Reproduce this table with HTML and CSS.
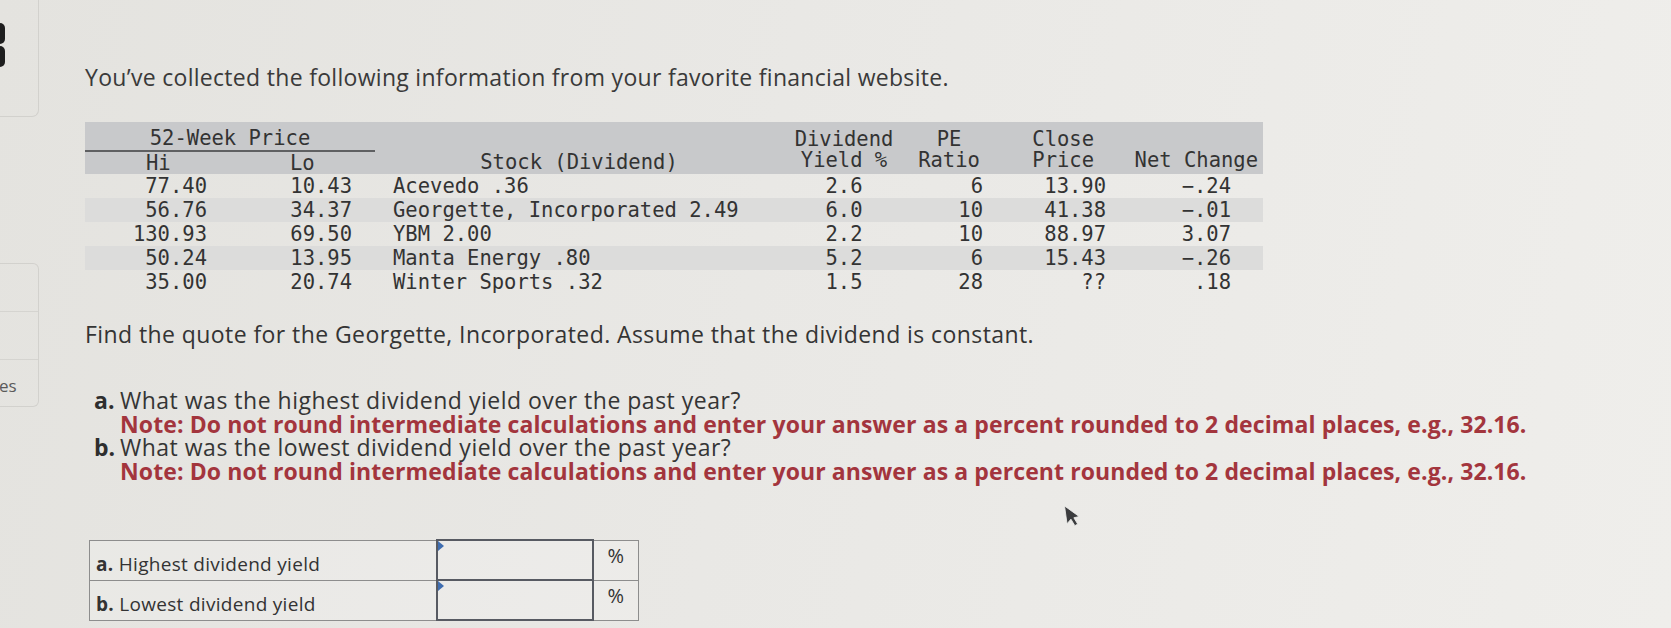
FILE: index.html
```html
<!DOCTYPE html>
<html lang="en">
<head>
<meta charset="utf-8">
<title>Stock quote question</title>
<link rel="stylesheet" href="styles.css">
</head>
<body>
<div class="page">
  <aside class="side">
    <div class="side-top"><span class="blob"></span><span class="blob"></span></div>
    <div class="side-box">
      <div class="side-cell"></div>
      <div class="side-cell"></div>
      <div class="side-cell last"><span class="side-text">es</span></div>
    </div>
  </aside>
  <main class="content">
    <p class="intro">You’ve collected the following information from your favorite financial website.</p>
    <table class="quote">
      <colgroup>
        <col class="c-hi"><col class="c-lo"><col class="c-stock"><col class="c-yld"><col class="c-pe"><col class="c-close"><col class="c-net">
      </colgroup>
      <thead>
        <tr class="h1">
          <th colspan="2" class="wk">52-Week Price</th>
          <th rowspan="2" class="stock-h">Stock (Dividend)</th>
          <th rowspan="2" class="yld-h">Dividend<br>Yield %</th>
          <th rowspan="2" class="pe-h">PE<br>Ratio</th>
          <th rowspan="2" class="close-h">Close<br>Price</th>
          <th rowspan="2" class="net-h">Net Change</th>
        </tr>
        <tr class="h2">
          <th class="hi-h">Hi</th>
          <th class="lo-h">Lo</th>
        </tr>
      </thead>
      <tbody>
        <tr><td class="hi">77.40</td><td class="lo">10.43</td><td class="stock">Acevedo .36</td><td class="yld">2.6</td><td class="pe">6</td><td class="close">13.90</td><td class="net">−.24</td></tr>
        <tr><td class="hi">56.76</td><td class="lo">34.37</td><td class="stock">Georgette, Incorporated 2.49</td><td class="yld">6.0</td><td class="pe">10</td><td class="close">41.38</td><td class="net">−.01</td></tr>
        <tr><td class="hi">130.93</td><td class="lo">69.50</td><td class="stock">YBM 2.00</td><td class="yld">2.2</td><td class="pe">10</td><td class="close">88.97</td><td class="net">3.07</td></tr>
        <tr><td class="hi">50.24</td><td class="lo">13.95</td><td class="stock">Manta Energy .80</td><td class="yld">5.2</td><td class="pe">6</td><td class="close">15.43</td><td class="net">−.26</td></tr>
        <tr><td class="hi">35.00</td><td class="lo">20.74</td><td class="stock">Winter Sports .32</td><td class="yld">1.5</td><td class="pe">28</td><td class="close">??</td><td class="net">.18</td></tr>
      </tbody>
    </table>
    <p class="find">Find the quote for the Georgette, Incorporated. Assume that the dividend is constant.</p>
    <ol class="questions">
      <li class="q">
        <b class="mk">a.</b>
        <div class="q-body">
          <div>What was the highest dividend yield over the past year?</div>
          <div class="note">Note: Do not round intermediate calculations and enter your answer as a percent rounded to 2 decimal places, e.g., 32.16.</div>
        </div>
      </li>
      <li class="q">
        <b class="mk">b.</b>
        <div class="q-body">
          <div>What was the lowest dividend yield over the past year?</div>
          <div class="note">Note: Do not round intermediate calculations and enter your answer as a percent rounded to 2 decimal places, e.g., 32.16.</div>
        </div>
      </li>
    </ol>
    <table class="answers">
      <tr>
        <td class="lbl"><b>a.</b> Highest dividend yield</td>
        <td class="inp"><span class="flag"></span></td>
        <td class="unit">%</td>
      </tr>
      <tr>
        <td class="lbl"><b>b.</b> Lowest dividend yield</td>
        <td class="inp"><span class="flag"></span></td>
        <td class="unit">%</td>
      </tr>
    </table>
  </main>
  <svg class="cursor" width="16" height="24" viewBox="0 0 16 24" aria-hidden="true">
    <path d="M2 1 L2 19 L6.5 15 L9.5 22 L12.5 20.8 L9.6 14 L15 13.5 Z" fill="#3b3c3e" stroke="#eeeeec" stroke-width="0.8"/>
  </svg>
</div>
</body>
</html>
```

FILE: styles.css
```css
html, body {
  margin: 0;
  padding: 0;
}

body {
  width: 1671px;
  height: 628px;
  overflow: hidden;
  background: linear-gradient(100deg, #e4e3df 0%, #e9e8e5 45%, #efeeeb 100%);
  color: #343434;
  font-family: "Open Sans", Lato, sans-serif;
}

.page {
  position: relative;
  display: flex;
  align-items: flex-start;
  height: 628px;
}

/* left sidebar fragment */
.side {
  width: 39px;
  flex: none;
  display: flex;
  flex-direction: column;
}

.side-top {
  border-right: 1px solid #d2d1cd;
  border-bottom: 1px solid #d2d1cd;
  border-bottom-right-radius: 7px;
  display: flex;
  flex-direction: column;
  gap: 2px;
  padding-top: 23px;
  box-sizing: border-box;
  height: 117px;
}

.blob {
  display: block;
  width: 5px;
  height: 21px;
  background: #1e1e1e;
  border-radius: 0 5px 5px 0;
}

.side-box {
  margin-top: 146px;
  border: 1px solid #d2d1cd;
  border-left: none;
  border-radius: 0 6px 6px 0;
  display: flex;
  flex-direction: column;
}

.side-cell {
  height: 47px;
  border-bottom: 1px solid #d5d4d0;
}

.side-cell.last {
  border-bottom: none;
  height: 46px;
  display: flex;
  align-items: center;
}

.side-text {
  font-size: 17px;
  color: #5a5a5a;
  margin-left: -1px;
  margin-top: 4px;
}

/* main content */
.content {
  margin-left: 46px;
  padding-top: 64px;
}

.intro {
  margin: 0;
  font-size: 23px;
  letter-spacing: 0.3px;
  line-height: 26px;
  color: #3a3a3a;
}

.quote {
  margin-top: 32px;
  border-collapse: separate;
  border-spacing: 0;
  table-layout: fixed;
  width: 1178px;
  font-family: "DejaVu Sans Mono", "Liberation Mono", monospace;
  font-size: 20.5px;
  color: #333;
}

.c-hi { width: 135px; }
.c-lo { width: 155px; }
.c-stock { width: 408px; }
.c-yld { width: 122px; }
.c-pe { width: 87px; }
.c-close { width: 123px; }
.c-net { width: 148px; }

.quote thead th {
  background: #c8c9cb;
  font-weight: normal;
  padding: 0;
  line-height: 21px;
  vertical-align: bottom;
  white-space: nowrap;
}

.quote .h1 .wk {
  height: 28px;
  text-align: center;
  border-bottom: 2px solid #5f6062;
  line-height: 24px;
  padding-bottom: 0;
}

.quote .h2 th {
  height: 22px;
  line-height: 22px;
  text-align: left;
}

.quote .hi-h { padding-left: 61px; }
.quote .lo-h { padding-left: 70px; }

.quote .stock-h { text-align: center; padding-bottom: 1px; }
.quote .yld-h { text-align: center; padding-bottom: 3px; }
.quote .pe-h { text-align: center; padding-left: 10px; padding-right: 9px; padding-bottom: 3px; }
.quote .close-h { text-align: right; padding-right: 21px; padding-bottom: 3px; }
.quote .net-h { text-align: right; padding-right: 5px; padding-bottom: 3px; }

.quote tbody td {
  height: 24px;
  line-height: 24px;
  padding: 0;
  white-space: nowrap;
}

.quote tbody tr:nth-child(even) td {
  background: #dcdcdb;
}

.quote .hi { text-align: right; padding-right: 13px; }
.quote .lo { text-align: right; padding-right: 23px; }
.quote .stock { text-align: left; padding-left: 18px; }
.quote .yld { text-align: center; }
.quote .pe { text-align: right; padding-right: 9px; }
.quote .close { text-align: right; padding-right: 9px; }
.quote .net { text-align: right; padding-right: 32px; }

.find {
  margin: 27px 0 0;
  font-size: 23px;
  letter-spacing: 0.42px;
  line-height: 26px;
  color: #343434;
}

.questions {
  list-style: none;
  margin: 42px 0 0 9px;
  padding: 0;
  font-size: 23px;
  letter-spacing: 0.5px;
  line-height: 23.5px;
  color: #353535;
}

.q {
  display: flex;
}

.mk {
  width: 26px;
  flex: none;
  font-weight: bold;
  color: #2e2e2e;
  letter-spacing: 0;
}

.note {
  color: #a3353d;
  font-weight: bold;
  letter-spacing: 0.1px;
}

.answers {
  margin: 56px 0 0 4px;
  border-collapse: collapse;
  font-size: 19px;
  letter-spacing: 0.3px;
  color: #333;
}

.answers td {
  border: 1px solid #8d8d8d;
  padding: 0;
  background: rgba(255, 255, 255, 0.18);
}

.answers .lbl {
  width: 340px;
  padding: 8px 0 0 6px;
  line-height: 30px;
  vertical-align: middle;
}

.answers .inp {
  width: 154px;
  height: 38px;
  border: 2px solid #575a62;
  position: relative;
}

.answers .unit {
  width: 44px;
  height: 38px;
  text-align: center;
  font-size: 20px;
  line-height: 30px;
  vertical-align: top;
}

.flag {
  position: absolute;
  left: 0;
  top: 0;
  width: 0;
  height: 0;
  border-top: 5px solid transparent;
  border-bottom: 5px solid transparent;
  border-left: 6px solid #3f6db0;
}

.cursor {
  position: absolute;
  left: 1064px;
  top: 504px;
  transform: rotate(-8deg);
}
```
